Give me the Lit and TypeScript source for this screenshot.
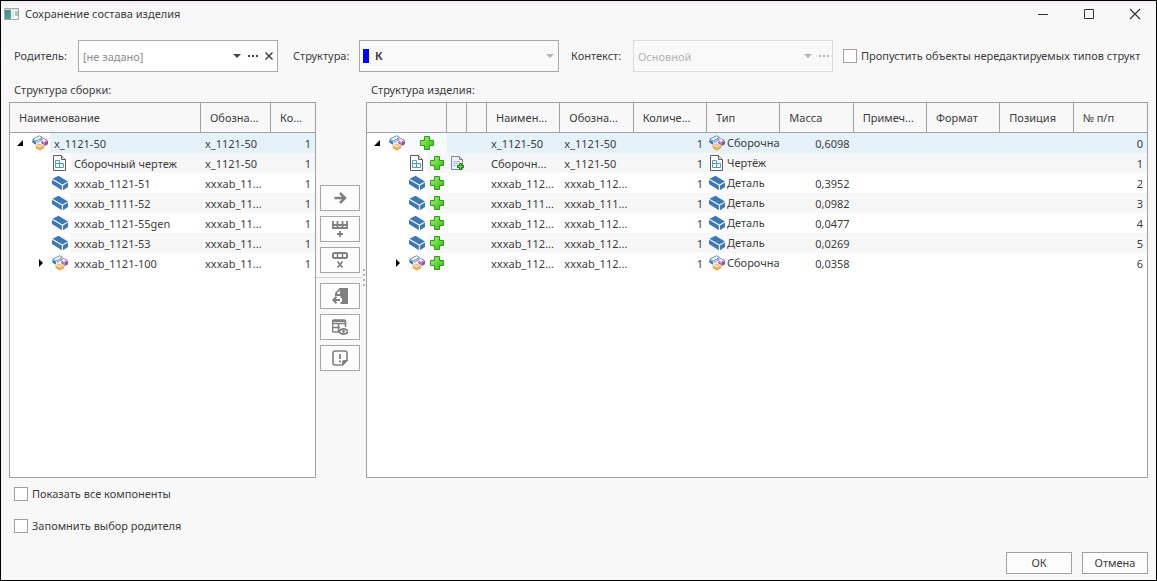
import { LitElement, html, svg, css, nothing } from "lit";
import { customElement, property } from "lit/decorators.js";
import { classMap } from "lit/directives/class-map.js";

type Kind = "assembly" | "drawing" | "part";

interface Item {
  kind: Kind;
  level: number;
  expander?: "open" | "closed";
  name: string;
  shortName: string;
  code: string;
  shortCode: string;
  type: string;
  mass: string;
}

const ITEMS: Item[] = [
  { kind: "assembly", level: 0, expander: "open", name: "x_1121-50", shortName: "x_1121-50", code: "x_1121-50", shortCode: "x_1121-50", type: "Сборочна", mass: "0,6098" },
  { kind: "drawing", level: 1, name: "Сборочный чертеж", shortName: "Сборочн...", code: "x_1121-50", shortCode: "x_1121-50", type: "Чертёж", mass: "" },
  { kind: "part", level: 1, name: "xxxab_1121-51", shortName: "xxxab_112...", code: "xxxab_112...", shortCode: "xxxab_11...", type: "Деталь", mass: "0,3952" },
  { kind: "part", level: 1, name: "xxxab_1111-52", shortName: "xxxab_111...", code: "xxxab_111...", shortCode: "xxxab_11...", type: "Деталь", mass: "0,0982" },
  { kind: "part", level: 1, name: "xxxab_1121-55gen", shortName: "xxxab_112...", code: "xxxab_112...", shortCode: "xxxab_11...", type: "Деталь", mass: "0,0477" },
  { kind: "part", level: 1, name: "xxxab_1121-53", shortName: "xxxab_112...", code: "xxxab_112...", shortCode: "xxxab_11...", type: "Деталь", mass: "0,0269" },
  { kind: "assembly", level: 1, expander: "closed", name: "xxxab_1121-100", shortName: "xxxab_112...", code: "xxxab_112...", shortCode: "xxxab_11...", type: "Сборочна", mass: "0,0358" },
];

const GLYPHS = {
  assembly: svg`
    <path d="M.8 4.200 7.500.8l3 1.600L4 6z" fill="#fff" stroke="#4a83bb" stroke-width=".9"/>
    <path d="M.3 4.800 4 6.700v3L.3 7.600z" fill="#3c78b4"/>
    <path d="M4.700 6.600 8 5v1.600L4.700 8.600z" fill="#8db3d6"/>
    <path d="M8.200 5.200 11.500 3.500l3.900 1.800-3.400 2z" fill="#fff" stroke="#9a62ac" stroke-width=".9"/>
    <path d="M12.400 7.800 16 5.800v3.400l-3.600 2z" fill="#8f4fa3"/>
    <path d="M8.500 6.600 11.800 8v2L10 9z" fill="#8f4fa3"/>
    <path d="M3.600 10.300 8 12.200l4.200-1.900v3L8 15.800l-4.400-2.500z" fill="#ecb05a"/>
    <path d="M4 9.800 7 8.300l4.500 1.900L8 11.600z" fill="#f1c582"/>`,
  drawing: svg`
    <path d="M1.500.5h8l4 4v11h-12z" fill="#fff" stroke="#5c5c5c"/>
    <path d="M9.500.5v4h4" fill="#ddd" stroke="#5c5c5c"/>
    <path d="M3.500 5.500h4v3h4v4h-8zM3.500 8.500h4v4" fill="none" stroke="#4c9fc0"/>`,
  part: svg`
    <path d="M.5 3.800 6.500.8 16 6.400l-5.600 3.200z" fill="#3c78b4"/>
    <path d="M0 4.700 9.900 10.600v4.600L0 9z" fill="#3c78b4"/>
    <path d="M11 10.600 16 7.600v4.400l-5 3.200z" fill="#3c78b4"/>`,
  add: svg`
    <defs><linearGradient id="g" x1="0" y1="0" x2="1" y2="1">
      <stop offset="0" stop-color="#b5f08a"/><stop offset=".5" stop-color="#66d83a"/><stop offset="1" stop-color="#3fba1c"/>
    </linearGradient></defs>
    <path d="M5.500 1.500h5v4h4v5h-4v4h-5v-4h-4v-5h4z" fill="url(#g)" stroke="#2c9a1c" stroke-linejoin="round"/>`,
  sheetAdd: svg`
    <path d="M2.500 1.500h8l3 3v10h-11z" fill="#eef1f8" stroke="#7d86a8"/>
    <path d="M10.500 1.500v3h3" fill="#c5cce0" stroke="#7d86a8"/>
    <path d="M4 6.500h7M4 8.500h5M4 10.500h3" stroke="#b4bcd4"/>
    <path d="M10.500 8.500h2v2h2v2h-2v2h-2v-2h-2v-2h2z" fill="#5ee038" stroke="#127a0c"/>`,
  next: svg`<path d="M2.500 8h10M8 3l5 5-5 5" fill="none" stroke="#808080" stroke-width="2.500"/>`,
  gridAdd: svg`
    <path d="M1 0v7h14V0M0 4h16M5.500 0v7M10.500 0v7" fill="none" stroke="#808080" stroke-width="1.800"/>
    <path d="M8 10v6M5 13h6" stroke="#808080" stroke-width="1.800"/>`,
  gridRemove: svg`
    <rect x="1" y="1" width="14" height="5" rx="1.500" fill="none" stroke="#808080" stroke-width="2"/>
    <path d="M5.500 1v5M10.500 1v5" stroke="#808080" stroke-width="1.600"/>
    <path d="m5.500 9.500 5 6M10.500 9.500l-5 6" stroke="#808080" stroke-width="1.800"/>`,
  back: svg`
    <path fill-rule="evenodd" d="M7.500 0H16v16H8.500v-2H10v-4H8.500V8H3V5zM8 2 5 5.200V6h3z" fill="#808080"/>
    <path d="M8 12H1.500M4.500 8.800 1.400 12l3.100 3.200" fill="none" stroke="#808080" stroke-width="2"/>`,
  tableView: svg`
    <path d="M7 13H2a1.500 1.500 0 0 1-1.500-1.500v-9A1.500 1.500 0 0 1 2 1h10a1.500 1.500 0 0 1 1.500 1.500V8M0 4.500h13.500M0 8.500h8M6.500 4v9" fill="none" stroke="#808080" stroke-width="1.600"/>
    <path d="M1 1h12v2H1z" fill="#808080"/>
    <path d="M7 12.500C9 9 14 9 16 12.500c-2 3.500-7 3.500-9 0z" fill="#fdfdfd" stroke="#808080" stroke-width="1.600"/>
    <circle cx="11.500" cy="12.500" r="1.400" fill="#808080"/>`,
  note: svg`
    <path d="M10.500 15H3a2 2 0 0 1-2-2V3a2 2 0 0 1 2-2h10a2 2 0 0 1 2 2v7.500z" fill="none" stroke="#808080" stroke-width="1.600"/>
    <path d="M10 16v-4a2 2 0 0 1 2-2h4z" fill="#808080"/>
    <path d="M8 4v5M8 10.500v2" stroke="#808080" stroke-width="1.800"/>`,
  open: svg`<path d="M11 5v6H5z" fill="#000"/>`,
  closed: svg`<path d="M7 4v8l4-4z" fill="#000"/>`,
  caret: svg`<path d="M4 6h8l-4 4z" fill="currentColor"/>`,
  dots: svg`<path d="M3 7h2v2H3zM7 7h2v2H7zM11 7h2v2h-2z" fill="currentColor"/>`,
  cross: svg`<path d="m4.500 4.500 7 7M11.500 4.500l-7 7" stroke="currentColor" stroke-width="1.500"/>`,
  minimize: svg`<path d="M3 8.500h10" stroke="#333"/>`,
  maximize: svg`<path d="M3.500 3.500h9v9h-9z" fill="none" stroke="#333"/>`,
  close: svg`<path d="m3 3 10 10M13 3 3 13" stroke="#333" stroke-width="1.200"/>`,
  app: svg`
    <defs><linearGradient id="a" x1="0" y1="0" x2="1" y2="1">
      <stop offset="0" stop-color="#4b7fa8"/><stop offset="1" stop-color="#4fae84"/>
    </linearGradient></defs>
    <path d="M1.500 2.500h14v11h-14z" fill="#fff" stroke="#a8a8a8"/>
    <path d="M2 3h13v1H2z" fill="#d5dbe2"/>
    <path d="M2 4h6v9H2z" fill="url(#a)"/>
    <path d="M9 5h2v7H9z" fill="#dfe3e6"/><path d="M12 5h3v5h-3z" fill="#a9cbb9"/>`,
};

@customElement("ui-glyph")
export class UiGlyph extends LitElement {
  @property() name: keyof typeof GLYPHS = "part";

  static styles = css`
    :host { display: inline-flex; flex: none; width: 16px; height: 16px; }
    .art { display: block; width: 16px; height: 16px; }
  `;

  render() {
    return html`<svg class="art" viewBox="0 0 16 16" aria-hidden="true">${GLYPHS[this.name]}</svg>`;
  }
}

@customElement("app-root")
export class AppRoot extends LitElement {
  static styles = css`
    :host {
      display: block;
      font: 11px/20px "Noto Sans", "Open Sans", sans-serif;
      color: #3c3c3c;
    }
    * { box-sizing: border-box; }
    button, input, select { font: inherit; color: inherit; margin: 0; }
    button { padding: 0; }

    .window {
      display: flex;
      flex-direction: column;
      min-height: 100vh;
      border: 1px solid #000;
      background: #f8f8f8;
      overflow: hidden;
    }
    .titlebar {
      display: flex;
      align-items: center;
      height: 26px;
      padding: 0 5px 0 2px;
      background: linear-gradient(#efebef, #f8f8f8 5px);
    }
    .title { flex: 1; margin: 0 0 0 6px; font-size: 11px; font-weight: 400; }
    .caption-buttons { display: flex; gap: 14px; }
    .plain {
      display: inline-flex;
      align-items: center;
      justify-content: center;
      width: 32px;
      height: 24px;
      border: 0;
      background: none;
    }
    .toolbar {
      display: grid;
      grid-template-columns: 264px 281px 274px minmax(0, 1fr);
      align-items: center;
      padding: 13px 8px 0 13px;
    }
    .field { display: flex; align-items: center; justify-content: space-between; }
    .structure { padding-left: 15px; }
    .context { padding-left: 12px; }
    .skip { padding-left: 10px; }
    .label { white-space: nowrap; }
    .box {
      display: flex;
      align-items: center;
      position: relative;
      width: 200px;
      height: 32px;
      border: 1px solid #aaa;
      background: #fff;
      color: #444;
    }
    .box.flat { background: #f9f9f9; }
    .box.off { border-color: #dcdcdc; background: #f9f9f9; color: #b4b4b4; }
    .entry {
      flex: 1;
      min-width: 0;
      height: 100%;
      padding: 0 0 0 4px;
      border: 0;
      background: none;
      outline: 0;
    }
    .entry::placeholder { color: #8c8c8c; opacity: 1; }
    .entry:disabled { color: #b4b4b4; }
    .mini { width: 16px; }
    .choice {
      appearance: none;
      width: 100%;
      height: 100%;
      padding: 0 20px 0 15px;
      border: 0;
      background: none;
      font-weight: 700;
    }
    .swatch { position: absolute; left: 3px; top: 8px; width: 6px; height: 14px; background: #00f; }
    .choice-caret { position: absolute; right: 0; top: 7px; color: #b4b4b4; pointer-events: none; }

    .check { display: flex; align-items: center; min-width: 0; gap: 4px; white-space: nowrap; overflow: hidden; }
    .tick {
      appearance: none;
      flex: none;
      width: 14px;
      height: 14px;
      border: 1px solid #a0a0a0;
      background: #fff;
    }

    .panes {
      flex: 1;
      display: grid;
      grid-template-columns: minmax(0, 307fr) 50px minmax(0, 782fr);
      padding: 8px 8px 0;
    }
    .pane { display: flex; flex-direction: column; }
    .pane-title { margin: 0; padding: 0 5px 2px; font-size: 11px; font-weight: 400; }
    .sheet { flex: 1; border: 1px solid #a0a0a0; background: #fff; overflow: hidden; }

    .grid { width: 100%; table-layout: fixed; border-collapse: separate; border-spacing: 0; }
    th {
      height: 30px;
      padding: 0 0 0 9px;
      border-right: 1px solid #a0a0a0;
      border-bottom: 1px solid #a0a0a0;
      background: #f8f8f8;
      font-weight: 400;
      text-align: left;
      white-space: nowrap;
      overflow: hidden;
    }
    th:last-child { border-right: 0; }
    td {
      height: 20px;
      padding: 2px 4px 0;
      line-height: 18px;
      white-space: nowrap;
      overflow: hidden;
      background: var(--row, #fff);
    }
    tr.striped { --row: #f7f7f7; --tip: #f7f7f7; }
    tr.selected { --row: #e6f2fa; --tip: #e6f2fa; }
    .right tr.selected { --tip: #f6fbfe; }
    td.tree { padding: 0; background: #fff; }
    .num { text-align: right; }
    td.type { padding: 0 0 0 2px; }
    .typed { display: flex; align-items: center; gap: 2px; }
    .node { display: flex; align-items: center; height: 20px; }
    .slot { display: flex; align-items: center; justify-content: center; flex: none; width: 20px; height: 20px; border: 0; background: none; }
    .tip { flex: 1; display: flex; align-items: center; min-width: 0; height: 20px; padding: 2px 0 0 4px; background: var(--tip, #fff); }
    .tip.mid { justify-content: center; padding: 0; }
    td.mark { padding: 0; }
    .w-tree { width: 80px; }
    .w-mark { width: 20px; }
    .w-code { width: 70px; }
    .w-count { width: 44px; }

    .actions {
      display: flex;
      flex-direction: column;
      justify-content: center;
      gap: 5px;
      position: relative;
      padding-bottom: 3px;
    }
    .action {
      display: flex;
      align-items: center;
      justify-content: center;
      width: 40px;
      height: 26px;
      margin-left: 4px;
      border: 1px solid #a8a8a8;
      background: #fdfdfd;
    }
    .rule { width: 46px; height: 1px; margin: -1px 0 0; border: 0; background: #d0d0d0; }
    .grip { position: absolute; right: 1px; top: calc(50% - 10px); display: grid; gap: 3px; }
    .grip-dot { width: 2px; height: 2px; background: #b0b0b0; }

    .options { display: flex; flex-direction: column; gap: 12px; padding: 6px 13px 0; }
    .footer { display: flex; justify-content: flex-end; gap: 10px; padding: 16px 8px 6px; }
    .push { width: 66px; height: 22px; border: 1px solid #a0a0a0; background: #fdfdfd; }
  `;

  private treeNode(item: Item, tip: unknown, centered: boolean) {
    return html`<div class="node">
      ${item.level ? html`<span class="slot"></span>` : nothing}
      ${item.expander
        ? html`<button class="slot" aria-label=${item.expander === "open" ? "Свернуть" : "Развернуть"}><ui-glyph name=${item.expander}></ui-glyph></button>`
        : html`<span class="slot"></span>`}
      <span class="slot"><ui-glyph name=${item.kind}></ui-glyph></span>
      <span class=${classMap({ tip: true, mid: centered })}>${tip}</span>
    </div>`;
  }

  private rowClass(index: number) {
    return classMap({ selected: index === 0, striped: index % 2 === 1 });
  }

  private renderLeft() {
    return html`<table class="grid">
      <thead><tr><th>Наименование</th><th class="w-code">Обозна...</th><th class="w-count">Ко...</th></tr></thead>
      <tbody>
        ${ITEMS.map((item, i) => html`<tr class=${this.rowClass(i)}>
          <td class="tree">${this.treeNode(item, item.name, false)}</td>
          <td>${item.shortCode}</td>
          <td class="num">1</td>
        </tr>`)}
      </tbody>
    </table>`;
  }

  private renderRight() {
    const titles = ["Наимен...", "Обозна...", "Количе...", "Тип", "Масса", "Примеч...", "Формат", "Позиция", "№ п/п"];
    return html`<table class="grid right">
      <thead><tr>
        <th class="w-tree"></th><th class="w-mark"></th><th class="w-mark"></th>
        ${titles.map((title) => html`<th>${title}</th>`)}
      </tr></thead>
      <tbody>
        ${ITEMS.map((item, i) => html`<tr class=${this.rowClass(i)}>
          <td class="tree">${this.treeNode(item, html`<ui-glyph name="add"></ui-glyph>`, true)}</td>
          <td class="mark">${item.kind === "drawing" ? html`<span class="slot"><ui-glyph name="sheetAdd"></ui-glyph></span>` : nothing}</td>
          <td class="mark"></td>
          <td>${item.shortName}</td>
          <td>${item.code}</td>
          <td class="num">1</td>
          <td class="type"><span class="typed"><ui-glyph name=${item.kind}></ui-glyph>${item.type}</span></td>
          <td class="num">${item.mass}</td>
          <td></td><td></td><td></td>
          <td class="num">${i}</td>
        </tr>`)}
      </tbody>
    </table>`;
  }

  private action(name: string, label: string) {
    return html`<button class="action" aria-label=${label}><ui-glyph name=${name}></ui-glyph></button>`;
  }

  render() {
    return html`<div class="window">
      <header class="titlebar">
        <ui-glyph name="app"></ui-glyph>
        <h1 class="title">Сохранение состава изделия</h1>
        <div class="caption-buttons">
          <button class="plain" aria-label="Свернуть"><ui-glyph name="minimize"></ui-glyph></button>
          <button class="plain" aria-label="Развернуть"><ui-glyph name="maximize"></ui-glyph></button>
          <button class="plain" aria-label="Закрыть"><ui-glyph name="close"></ui-glyph></button>
        </div>
      </header>

      <div class="toolbar">
        <div class="field">
          <label class="label" for="parent">Родитель:</label>
          <div class="box">
            <input class="entry" id="parent" placeholder="[не задано]">
            <button class="plain mini" aria-label="Список"><ui-glyph name="caret"></ui-glyph></button>
            <button class="plain mini" aria-label="Обзор"><ui-glyph name="dots"></ui-glyph></button>
            <button class="plain mini" aria-label="Очистить"><ui-glyph name="cross"></ui-glyph></button>
          </div>
        </div>
        <div class="field structure">
          <label class="label" for="structure">Структура:</label>
          <div class="box flat">
            <span class="swatch"></span>
            <select class="choice" id="structure"><option>К</option></select>
            <ui-glyph class="choice-caret" name="caret"></ui-glyph>
          </div>
        </div>
        <div class="field context">
          <label class="label" for="context">Контекст:</label>
          <div class="box off">
            <input class="entry" id="context" value="Основной" disabled>
            <button class="plain mini" aria-label="Список" disabled><ui-glyph name="caret"></ui-glyph></button>
            <button class="plain mini" aria-label="Обзор" disabled><ui-glyph name="dots"></ui-glyph></button>
          </div>
        </div>
        <label class="check skip"><input class="tick" type="checkbox">Пропустить объекты нередактируемых типов структ</label>
      </div>

      <main class="panes">
        <section class="pane">
          <h2 class="pane-title">Структура сборки:</h2>
          <div class="sheet">${this.renderLeft()}</div>
        </section>
        <div class="actions">
          ${this.action("next", "Перенести")}
          ${this.action("gridAdd", "Добавить строку")}
          ${this.action("gridRemove", "Удалить строку")}
          <hr class="rule">
          ${this.action("back", "Вернуть")}
          ${this.action("tableView", "Показать таблицу")}
          ${this.action("note", "Замечания")}
          <div class="grip"><span class="grip-dot"></span><span class="grip-dot"></span><span class="grip-dot"></span><span class="grip-dot"></span></div>
        </div>
        <section class="pane">
          <h2 class="pane-title">Структура изделия:</h2>
          <div class="sheet">${this.renderRight()}</div>
        </section>
      </main>

      <div class="options">
        <label class="check"><input class="tick" type="checkbox">Показать все компоненты</label>
        <label class="check"><input class="tick" type="checkbox">Запомнить выбор родителя</label>
      </div>
      <footer class="footer">
        <button class="push">ОК</button>
        <button class="push">Отмена</button>
      </footer>
    </div>`;
  }
}
